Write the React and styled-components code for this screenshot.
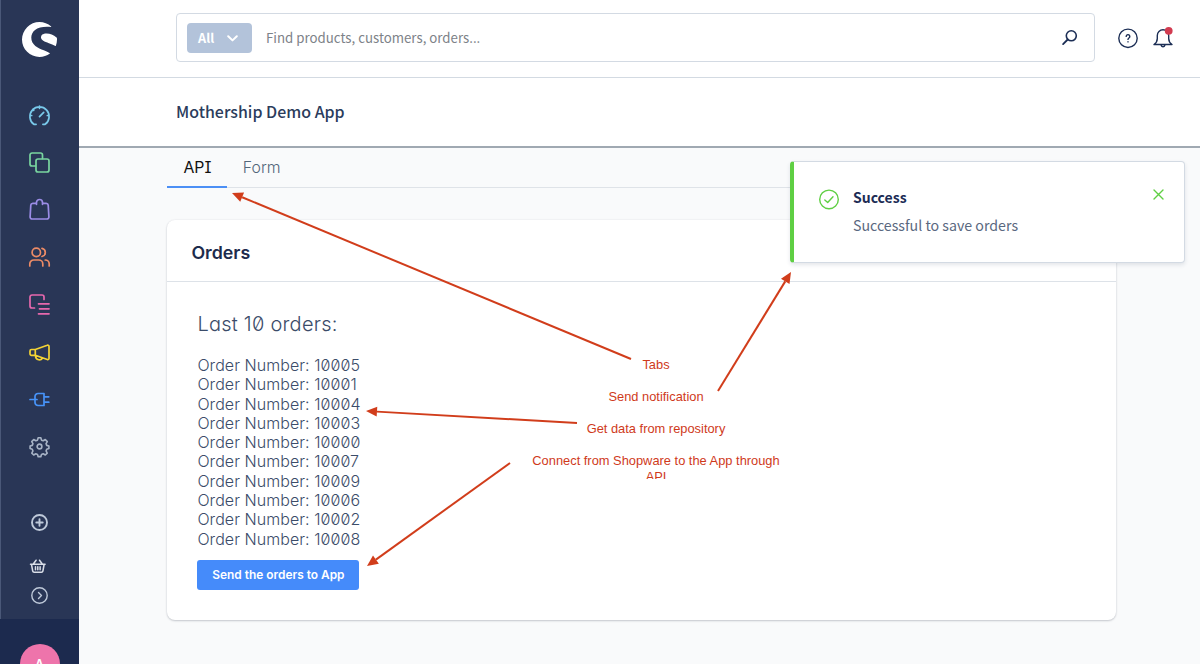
import React from "react";
import styled, { createGlobalStyle } from "styled-components";
import { SiShopware } from "react-icons/si";

const sans = `"Noto Sans CJK SC", "Source Sans Pro", sans-serif`;
const inter = `Inter, "Liberation Sans", sans-serif`;
const helvetica = `"Liberation Sans", Helvetica, sans-serif`;

const GlobalStyle = createGlobalStyle`
  *, *::before, *::after { box-sizing: border-box; }
  body { margin: 0; overflow: hidden; background: #f9fafb; }
`;

const Page = styled.div`
  position: relative;
  display: flex;
  width: 1200px;
  height: 664px;
  overflow: hidden;
  background: #f9fafb;
  font-family: ${sans};
`;

const Sidebar = styled.aside`
  display: flex;
  flex-direction: column;
  align-items: center;
  flex: none;
  width: 79px;
  height: 664px;
  padding-top: 22px;
  box-shadow: inset 1px 0 #4a5878;
  background: #293656;
  overflow: hidden;
`;

const Logo = styled(SiShopware)`
  flex: none;
  width: 35px;
  height: 35px;
  color: #fff;
`;

const NavList = styled.nav`
  display: flex;
  flex-direction: column;
  align-items: center;
  gap: 24.4px;
  margin-top: 46.7px;
`;

const NavIcon = styled.svg.attrs({ viewBox: "-0.5 -0.5 23 23" })`
  display: block;
  width: 23px;
  height: 23px;
  fill: none;
  stroke: ${(p) => p.$color};
  stroke-width: ${(p) => p.$weight || 1.7};
  stroke-linecap: round;
  stroke-linejoin: round;
`;

const FooterNav = styled.div`
  display: flex;
  flex-direction: column;
  align-items: center;
  margin-top: 52.3px;
  svg + svg { margin-top: 21px; }
  svg + svg + svg { margin-top: 6px; }
`;

const UserArea = styled.div`
  display: flex;
  justify-content: center;
  align-self: stretch;
  flex: none;
  height: 90px;
  margin-top: 12.3px;
  padding-top: 25px;
  background: #1c2a4e;
`;

const Avatar = styled.div`
  width: 40px;
  height: 40px;
  border-radius: 50%;
  background: #ee74ab;
  color: #fff;
  font: 500 15px/40px ${sans};
  text-align: center;
`;

const Main = styled.main`
  display: flex;
  flex-direction: column;
  flex: 1;
  min-width: 0;
`;

const TopBar = styled.header`
  display: flex;
  align-items: center;
  height: 78px;
  padding: 0 24px 3px 97px;
  border-bottom: 1px solid #d3dae2;
  background: #fff;
`;

const SearchBox = styled.div`
  display: flex;
  align-items: center;
  flex: none;
  width: 919px;
  height: 49px;
  margin-right: 22px;
  padding: 0 16px 0 10px;
  border: 1px solid #d3dae3;
  border-radius: 4px;
`;

const FilterButton = styled.div`
  display: flex;
  align-items: center;
  justify-content: space-between;
  width: 65px;
  height: 30px;
  margin-top: 1px;
  padding: 0 14px 0 11px;
  border-radius: 4px;
  background: #b3c3da;
  color: #fff;
  font: 700 12.7px/29px ${sans};
  svg { margin-top: 2px; }
`;

const Placeholder = styled.span`
  flex: 1;
  margin: 1px 0 0 14px;
  color: #7d8288;
  font-size: 13.28px;
  line-height: 20px;
`;

const TopIcon = styled.svg`
  flex: none;
  width: ${(p) => p.$size}px;
  height: ${(p) => p.$size}px;
  margin-top: 2px;
  margin-left: ${(p) => p.$gap || 0}px;
  fill: none;
  stroke: #1c2e55;
  stroke-width: 1.4;
  stroke-linecap: round;
  stroke-linejoin: round;
`;

const TitleBar = styled.div`
  height: 70px;
  padding: 21px 0 0 97px;
  border-bottom: 2px solid #a0a9b2;
  background: #fff;
`;

const Title = styled.h1`
  margin: 0;
  color: #2b3c5c;
  font-size: 15.95px;
  font-weight: 500;
  line-height: 24px;
`;

const Content = styled.section`
  width: 949px;
  margin-left: 88.4px;
`;

const Tabs = styled.div`
  display: flex;
  height: 40px;
  border-bottom: 1px solid #dfe3e8;
`;

const Tab = styled.div`
  height: 40px;
  padding: 8px 15.5px 0 16px;
  border-bottom: ${(p) => (p.$active ? "2px solid #4c8ff5" : "none")};
  color: ${(p) => (p.$active ? "#111" : "#52667a")};
  font-family: ${inter};
  font-size: 15.8px;
  font-weight: ${(p) => (p.$active ? 400 : 350)};
  font-feature-settings: "cv08" 1;
  line-height: 24px;
`;

const Card = styled.article`
  height: 400px;
  margin-top: 32px;
  border-radius: 8px;
  background: #fff;
  box-shadow: 0 1px 2px rgba(30, 40, 60, 0.22), 0 0 2px rgba(30, 40, 60, 0.08);
`;

const CardHeader = styled.header`
  height: 62px;
  padding: 20px 24px 0;
  border-bottom: 1px solid #dde2e8;
  color: #1d2b4c;
  font: 600 17.8px/26px ${inter};
`;

const CardBody = styled.div`
  padding: 29px 30px 0;
  color: #3b4c69;
  font-family: ${inter};
  font-feature-settings: "zero" 1, "cv11" 1;
`;

const Heading = styled.h2`
  margin: 0 0 19px;
  font-size: 20px;
  font-weight: 300;
  line-height: 26px;
  letter-spacing: 0.24px;
`;

const OrderList = styled.ul`
  margin: 0;
  padding: 0;
  list-style: none;
  font-size: 16px;
  font-weight: 300;
  line-height: 19.28px;
  letter-spacing: 0.06px;
`;

const PrimaryButton = styled.button`
  display: block;
  width: 162px;
  height: 30px;
  margin-top: 11px;
  padding: 0;
  border: 0;
  border-radius: 3px;
  background: #458bfa;
  color: #fff;
  font: 600 11.9px/30px ${inter};
`;

const Toast = styled.div`
  position: absolute;
  top: 161px;
  left: 790px;
  display: flex;
  width: 395px;
  height: 102px;
  padding: 26px 19px 0 24px;
  border: 1px solid #d3dae3;
  border-left: 4px solid #5fcf43;
  border-radius: 4px;
  background: #fff;
  box-shadow: 0 2px 4px rgba(30, 50, 80, 0.12);
`;

const ToastIcon = styled.svg`
  flex: none;
  width: ${(p) => p.$size}px;
  height: ${(p) => p.$size}px;
  fill: none;
  stroke: #5fcf43;
  stroke-width: 1.4;
  stroke-linecap: round;
  stroke-linejoin: round;
`;

const ToastText = styled.div`
  flex: 1;
  margin: -4px 0 0 13px;
  color: #5a6880;
  font-size: 14.2px;
  line-height: 27.5px;
  strong { display: block; color: #1c2c55; font-size: 14px; font-weight: 700; }
`;

const Annotations = styled.svg`
  position: absolute;
  inset: 0;
  width: 1200px;
  height: 664px;
  pointer-events: none;
`;

const NoteText = styled.div`
  position: absolute;
  top: 357px;
  left: 526px;
  width: 260px;
  height: 122px;
  overflow: hidden;
  color: #cf3a1b;
  font-family: ${helvetica};
  font-size: 12.87px;
  line-height: 16px;
  text-align: center;
  p { margin: 0 0 16px; }
`;

const nav = [
  ["#79c9ea", <g key="a"><path d="M7.6 19.8H5.4A9.6 9.6 0 1 1 16.6 19.8H14.4M11 1.6v2.2M11 12.2l4.2-4.4M1.5 11h1.7M18.8 11h1.7M4.3 4.9l.9.9" /></g>],
  ["#79d6a0", <g key="b"><path d="M7 14.5H3.5a2 2 0 0 1-2-2v-9a2 2 0 0 1 2-2h8.5a2 2 0 0 1 2 2V7" /><rect x="7.5" y="7.5" width="13" height="13" rx="2" /></g>],
  ["#9b8ce6", <g key="c"><path d="M7 4.8H4.3a2 2 0 0 0-2 1.8L1.6 18.4a2 2 0 0 0 2 2.1h14.8a2 2 0 0 0 2-2.1L19.7 6.6a2 2 0 0 0-2-1.8H15M8 5.8V4a3 3 0 0 1 6 0v1.8" /></g>],
  ["#ec8b66", <g key="d"><circle cx="7.8" cy="5.9" r="4.2" /><path d="M1.3 19.5v-2a4 4 0 0 1 4-4h5a4 4 0 0 1 4 4v2M13.5 1.8a4.2 4.2 0 0 1 0 8.2M16.7 13.5a4 4 0 0 1 4 4v2" /></g>],
  ["#e668ad", <g key="e"><path d="M6 14.5H3.5a2 2 0 0 1-2-2v-9a2 2 0 0 1 2-2h10a2 2 0 0 1 2 2V6M10 10.3h10.5M11 15.3h9.5M10 20.3h10.5" /></g>],
  ["#f3d335", <g key="f"><path d="M6.8 8H3a1.5 1.5 0 0 0-1.5 1.5v2.8A1.5 1.5 0 0 0 3 13.8h3.8zM6.8 8l12-4.2a1.2 1.2 0 0 1 1.7 1.2v11.8a1.2 1.2 0 0 1-1.7 1.2l-12-4.2M7 14c0 5 6 5.5 7 2.3" /></g>],
  ["#4793f8", <g key="g"><path d="M1.5 11h7M6.5 8a3 3 0 0 1 3-3h6v12h-6a3 3 0 0 1-3-3zM16 8.3h4.3M16 13.7h4.3" /></g>],
  ["#a7b3c5", <g key="h" transform="translate(.55 .55) scale(.95)"><circle cx="11" cy="11" r="2.5" /><path d="M9.6 1.8h2.8l.7 2.5 1.8.7 2.2-1.3 2.1 2.1-1.3 2.2.7 1.8 2.3.6v2.8l-2.3.7-.7 1.8 1.2 2.2-2 2-2.2-1.2-1.8.7-.7 2.3H9.6l-.7-2.3-1.8-.7-2.2 1.2-2-2 1.2-2.2-.7-1.8-2.3-.7v-2.8l2.3-.6.7-1.8-1.3-2.2 2.1-2.1 2.2 1.3 1.8-.7z" /></g>],
];

const orders = [10005, 10001, 10004, 10003, 10000, 10007, 10009, 10006, 10002, 10008];

const arrows = [
  [631, 359, 232, 193],
  [718, 391, 791, 272],
  [577, 423, 366, 411],
  [510, 463, 367, 566],
];

function Arrow({ from: [x1, y1], to: [x2, y2] }) {
  const length = Math.hypot(x2 - x1, y2 - y1);
  const ux = (x2 - x1) / length;
  const uy = (y2 - y1) / length;
  const bx = x2 - ux * 11;
  const by = y2 - uy * 11;
  return (
    <g>
      <line x1={x1} y1={y1} x2={bx} y2={by} stroke="#d13d1b" strokeWidth="2" />
      <polygon fill="#d13d1b" points={`${x2},${y2} ${bx - uy * 5},${by + ux * 5} ${bx + uy * 5},${by - ux * 5}`} />
    </g>
  );
}

export default function App() {
  return (
    <Page>
      <GlobalStyle />
      <Sidebar>
        <Logo />
        <NavList>
          {nav.map(([color, shape]) => (
            <NavIcon key={color} $color={color}>{shape}</NavIcon>
          ))}
        </NavList>
        <FooterNav>
          <NavIcon $color="#bec9d9" $weight={1.9}>
            <circle cx="11" cy="11" r="7.5" /><path d="M11 7.8v6.4M7.8 11h6.4" />
          </NavIcon>
          <NavIcon $color="#d9dee8" $weight={1.5}>
            <path d="M2 8.7h14.6M3 9l1.2 6.5a1.5 1.5 0 0 0 1.5 1.2h7.2a1.5 1.5 0 0 0 1.5-1.2L15.600 9M5 8.3l2.6-3.6M13.6 8.3l-2.6-3.6M7 11.3v3M9.3 11.3v3M11.6 11.3v3" />
          </NavIcon>
          <NavIcon $color="#bec9d9" $weight={1.4}>
            <circle cx="11" cy="11" r="7.7" /><path d="M10 8l3 3-3 3" />
          </NavIcon>
        </FooterNav>
        <UserArea><Avatar>A</Avatar></UserArea>
      </Sidebar>
      <Main>
        <TopBar>
          <SearchBox>
            <FilterButton>
              All
              <svg width="11" height="7" viewBox="0 0 11 7" fill="none" stroke="#fff" strokeWidth="2" strokeLinecap="round" strokeLinejoin="round"><path d="M1.2 1.2l4.3 4.2 4.3-4.2" /></svg>
            </FilterButton>
            <Placeholder>Find products, customers, orders...</Placeholder>
            <TopIcon $size={18} viewBox="0 0 18 18">
              <circle cx="11.3" cy="6.8" r="5" strokeWidth="1.6" /><path d="M7.7 10.5L3.1 15.1" strokeWidth="1.8" />
            </TopIcon>
          </SearchBox>
          <TopIcon $size={22} viewBox="0 0 22 22">
            <circle cx="11" cy="11.3" r="9.2" />
            <path d="M9.2 9.4a1.8 1.8 0 1 1 2.7 1.6c-.6.4-.9.7-.9 1.4M11 14.8v.1" />
          </TopIcon>
          <TopIcon $size={24} $gap={12.3} viewBox="0 0 24 24">
            <path d="M3 18.5h18c-2.3-1.6-3.3-3.2-3.3-6V9.5a5.7 5.7 0 0 0-11.4 0v3c0 2.8-1 4.4-3.3 6zM10.2 19.5a1.9 1.9 0 0 0 3.6 0" />
            <circle cx="17.7" cy="4.8" r="3.9" fill="#d23b50" stroke="none" />
          </TopIcon>
        </TopBar>
        <TitleBar><Title>Mothership Demo App</Title></TitleBar>
        <Content>
          <Tabs>
            <Tab $active>API</Tab>
            <Tab>Form</Tab>
          </Tabs>
          <Card>
            <CardHeader>Orders</CardHeader>
            <CardBody>
              <Heading>Last 10 orders:</Heading>
              <OrderList>
                {orders.map((n) => <li key={n}>Order Number: {n}</li>)}
              </OrderList>
              <PrimaryButton>Send the orders to App</PrimaryButton>
            </CardBody>
          </Card>
        </Content>
      </Main>
      <Toast>
        <ToastIcon $size={22} viewBox="0 0 22 22"><circle cx="11" cy="11.4" r="9.3" /><path d="M6.8 11.900l2.900 2.600 5.300-5.800" /></ToastIcon>
        <ToastText><strong>Success</strong>Successful to save orders</ToastText>
        <ToastIcon $size={13} viewBox="0 0 13 13"><path d="M2 2l9 9M11 2l-9 9" /></ToastIcon>
      </Toast>
      <Annotations viewBox="0 0 1200 664">
        {arrows.map(([x1, y1, x2, y2]) => <Arrow key={x1} from={[x1, y1]} to={[x2, y2]} />)}
      </Annotations>
      <NoteText>
        <p>Tabs</p>
        <p>Send notification</p>
        <p>Get data from repository</p>
        <p>Connect from Shopware to the App through API</p>
      </NoteText>
    </Page>
  );
}
